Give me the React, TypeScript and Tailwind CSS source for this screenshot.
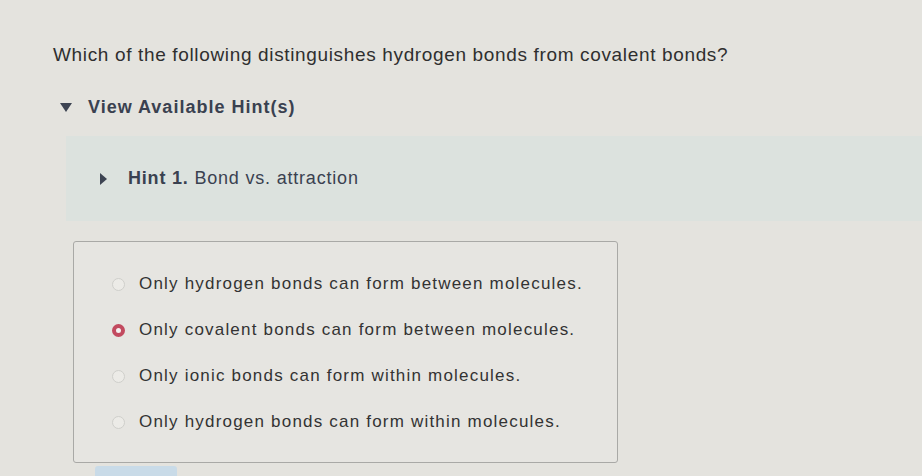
import React from "react";

const options = [
  "Only hydrogen bonds can form between molecules.",
  "Only covalent bonds can form between molecules.",
  "Only ionic bonds can form within molecules.",
  "Only hydrogen bonds can form within molecules.",
];

export default function App() {
  return (
    <div
      className="w-[922px] h-[476px] overflow-hidden bg-[#e4e3de] text-[#333333]"
      style={{ fontFamily: '"Liberation Sans", Arial, sans-serif' }}
    >
      <div className="pt-[44px] pl-[53px]">
        <p className="text-[19px] leading-[22px] text-[#2f2f2f] tracking-[0.65px]">
          Which of the following distinguishes hydrogen bonds from covalent bonds?
        </p>
      </div>
      <div className="mt-[28px] pl-[60px] flex items-center gap-[16px]">
        <svg width="12" height="10" viewBox="0 0 12 10">
          <path d="M0 0 L12 0 L6 9 Z" fill="#3d4452" />
        </svg>
        <span className="text-[18px] font-bold text-[#3a4150] tracking-[1px]">
          View Available Hint(s)
        </span>
      </div>
      <div className="mt-[15px] ml-[66px] h-[85px] bg-[#dce2de] flex items-center pl-[34px] gap-[21px]">
        <svg width="7" height="12" viewBox="0 0 7 12">
          <path d="M0 0 L7 6 L0 12 Z" fill="#3d4452" />
        </svg>
        <span className="text-[18px] text-[#3a4150] tracking-[0.8px]">
          <b>Hint 1.</b> Bond vs. attraction
        </span>
      </div>
      <div className="mt-[20px] ml-[73px] w-[545px] h-[222px] border border-[#a9a9a6] rounded-[3px] bg-[#e6e5e1] flex flex-col pt-[32px] pl-[38px] gap-[26px]">
        {options.map((o, i) => (
          <div key={i} className="flex items-center gap-[14px] h-[20px]">
            {i === 1 ? (
              <span className="w-[13px] h-[13px] rounded-full border-[4px] border-[#c24a5f] bg-[#f4f0f0]" />
            ) : (
              <span className="w-[13px] h-[13px] rounded-full border border-[#cfcfcb] bg-[#ecebe7]" />
            )}
            <span className="text-[17px] text-[#333333] tracking-[1.2px]">{o}</span>
          </div>
        ))}
      </div>
      <div className="mt-[3px] ml-[95px] w-[82px] h-[10px] bg-[#c9dbe8] rounded-t-[3px]" />
    </div>
  );
}
